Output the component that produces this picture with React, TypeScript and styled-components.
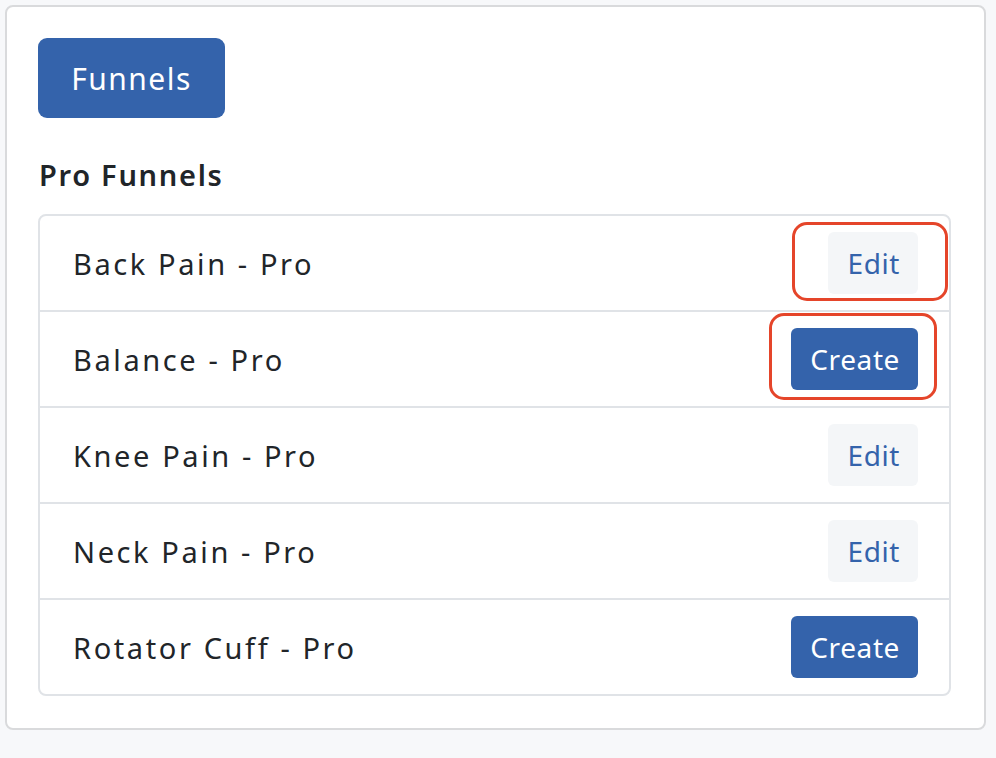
import React from "react";
import styled, { createGlobalStyle } from "styled-components";

const GlobalStyle = createGlobalStyle`
  html, body {
    margin: 0;
    padding: 0;
    background: #f7f8fa;
    font-family: "Noto Sans", "Open Sans", sans-serif;
    color: #212529;
  }
`;

interface FunnelItem {
  name: string;
  exists: boolean;
  mark?: "edit" | "create";
}

const funnels: FunnelItem[] = [
  { name: "Back Pain - Pro", exists: true, mark: "edit" },
  { name: "Balance - Pro", exists: false, mark: "create" },
  { name: "Knee Pain - Pro", exists: true },
  { name: "Neck Pain - Pro", exists: true },
  { name: "Rotator Cuff - Pro", exists: false },
];

const App = () => {
  return (
    <Page>
      <GlobalStyle />
      <Card>
        <FunnelsButton>Funnels</FunnelsButton>
        <SectionTitle>Pro Funnels</SectionTitle>
        <List>
          {funnels.map((item) => (
            <Row key={item.name}>
              <RowTitle>{item.name}</RowTitle>
              <ActionBox>
                {item.exists ? (
                  <ActionButton $variant="light">Edit</ActionButton>
                ) : (
                  <ActionButton $variant="primary">Create</ActionButton>
                )}
                {item.mark && <Highlight $kind={item.mark} />}
              </ActionBox>
            </Row>
          ))}
        </List>
      </Card>
    </Page>
  );
};

export default App;

const Page = styled.div`
  padding: 5px 10px 29px 5px;
  min-height: 758px;
  box-sizing: border-box;
`;

const Card = styled.div`
  background: #fff;
  border: 2px solid #d9dadc;
  border-radius: 8px;
  padding: 31px 33px 32px 31px;
  display: flex;
  flex-direction: column;
  align-items: flex-start;
`;

const FunnelsButton = styled.button`
  width: 187px;
  height: 80px;
  border: none;
  border-radius: 9px;
  background: #3463ab;
  color: #fff;
  font-family: inherit;
  font-size: 30px;
  letter-spacing: 1.5px;
  cursor: pointer;
`;

const SectionTitle = styled.h2`
  margin: 38px 0 20px 1px;
  font-size: 29px;
  font-weight: 600;
  line-height: 38px;
  letter-spacing: 1.7px;
  color: #212529;
`;

const List = styled.ul`
  list-style: none;
  margin: 0;
  padding: 0;
  align-self: stretch;
  border: 2px solid #e0e3e7;
  border-radius: 8px;
`;

const Row = styled.li`
  height: 94px;
  padding: 0 31px 0 33px;
  display: flex;
  align-items: center;
  justify-content: space-between;
  &:not(:last-child) {
    border-bottom: 2px solid #e0e3e7;
  }
`;

const RowTitle = styled.span`
  font-size: 29px;
  letter-spacing: 2.6px;
  color: #212529;
`;

const ActionBox = styled.div`
  position: relative;
  display: flex;
`;

const ActionButton = styled.button<{ $variant: "light" | "primary" }>`
  height: 62px;
  padding: 0 18px 0 19px;
  border: none;
  border-radius: 6px;
  font-family: inherit;
  font-size: 28px;
  letter-spacing: 0.6px;
  cursor: pointer;
  background: ${({ $variant }) => ($variant === "primary" ? "#3463ab" : "#f4f6f8")};
  color: ${({ $variant }) => ($variant === "primary" ? "#fff" : "#3463ab")};
`;

const Highlight = styled.span<{ $kind: "edit" | "create" }>`
  position: absolute;
  pointer-events: none;
  border: 3px solid #e5452a;
  border-radius: 15px;
  ${({ $kind }) =>
    $kind === "edit"
      ? "left: -36px; right: -30px; top: -10px; bottom: -7px;"
      : "left: -22px; right: -19px; top: -15px; bottom: -10px;"}
`;
